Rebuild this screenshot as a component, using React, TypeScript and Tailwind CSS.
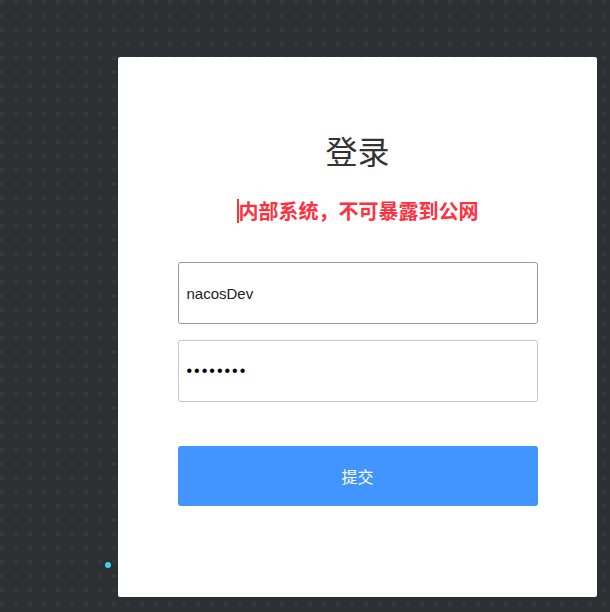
import React from "react";

export default function App() {
  return (
    <div
      className="relative w-[610px] h-[612px] overflow-hidden bg-[#2e2f33] bg-[conic-gradient(from_270deg_at_4px_4px,#36373c_25%,transparent_0)] bg-[length:14px_14px] bg-[position:0px_0px] pt-[57px] pl-[118px]"
      style={{ fontFamily: '"Liberation Sans", "Noto Sans CJK SC", sans-serif' }}
    >
      <div className="w-[479px] h-[540px] bg-white rounded-[2px] flex flex-col items-center pt-[77px]">
        <h1 className="text-[32px] leading-[32px] text-[#333] font-normal" style={{ fontFamily: '"Noto Sans CJK SC", sans-serif' }}>
          登录
        </h1>
        <div className="mt-[33px] flex items-center h-[24px]">
          <span className="w-[2px] h-[24px] bg-[#ff3040]" />
          <span className="text-[20px] leading-[20px] font-bold text-[#ff3040]" style={{ fontFamily: '"Noto Sans CJK SC", sans-serif' }}>
            内部系统，不可暴露到公网
          </span>
        </div>
        <div className="mt-[39px] w-[360px] flex flex-col gap-[16px]">
          <input
            type="text"
            defaultValue="nacosDev"
            className="h-[62px] w-full border border-[#999999] rounded-[3px] px-[8px] text-[15px] text-[#222] outline-none bg-white"
          />
          <input
            type="password"
            defaultValue="12345678"
            className="h-[62px] w-full border border-[#c4c6cf] rounded-[3px] px-[8px] text-[16px] tracking-[2px] text-black outline-none bg-white"
          />
        </div>
        <button className="mt-[44px] w-[360px] h-[60px] bg-[#4295fd] rounded-[3px] text-white text-[16px]" style={{ fontFamily: '"Noto Sans CJK SC", sans-serif' }}>
          提交
        </button>
      </div>
      <span className="absolute left-[105px] top-[562px] w-[6px] h-[6px] rounded-full bg-[#36d5ea]" />
    </div>
  );
}
